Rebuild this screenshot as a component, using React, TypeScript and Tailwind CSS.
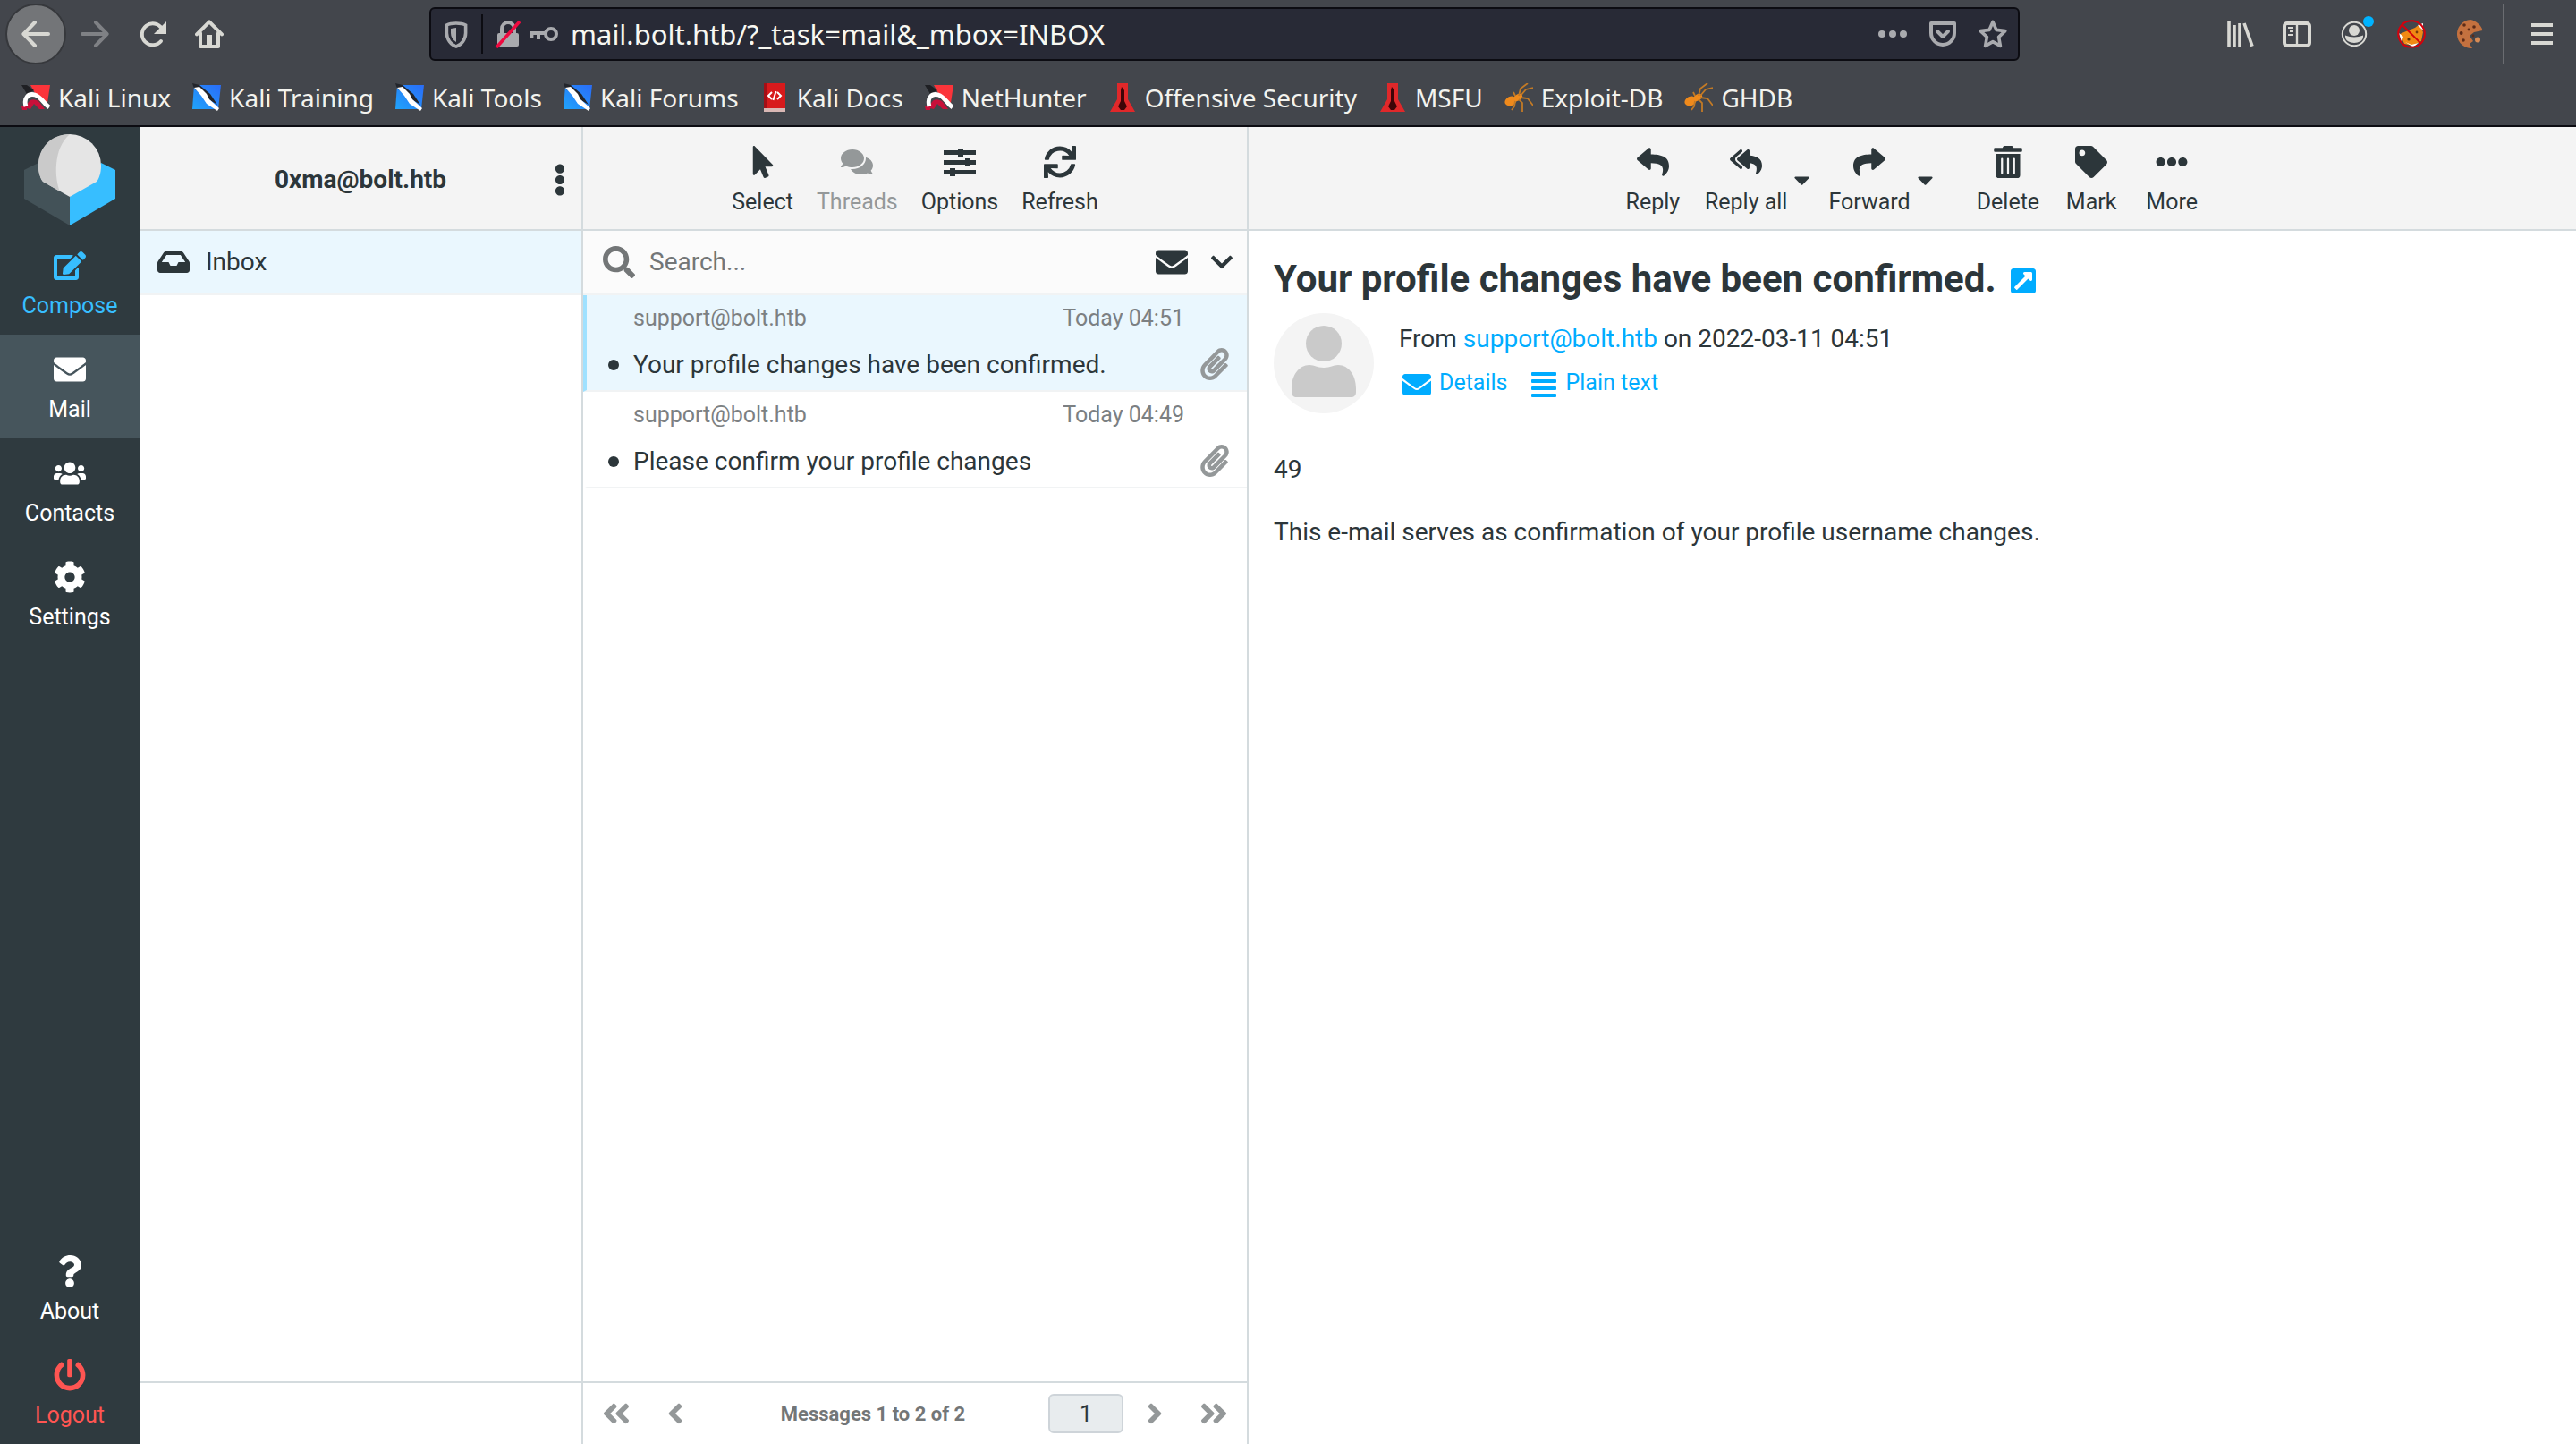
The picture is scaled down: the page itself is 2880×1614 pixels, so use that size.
import type { ReactNode } from 'react';
import {
  FaAlignJustify,
  FaAngleDoubleLeft,
  FaAngleDoubleRight,
  FaAngleLeft,
  FaAngleRight,
  FaCaretDown,
  FaChevronDown,
  FaCog,
  FaComments,
  FaEdit,
  FaEllipsisH,
  FaEllipsisV,
  FaEnvelope,
  FaExternalLinkSquareAlt,
  FaInbox,
  FaMousePointer,
  FaPaperclip,
  FaPowerOff,
  FaQuestion,
  FaReply,
  FaReplyAll,
  FaSearch,
  FaShare,
  FaSync,
  FaTag,
  FaTrashAlt,
  FaUsers,
} from 'react-icons/fa';

const icon = 'h-9 w-auto';

function KaliRed() {
  return (
    <svg viewBox="0 0 16 16" className="size-8">
      <path d="M5 1h11l-1.500 10L10 10z" fill="#fb343a" />
      <path d="M0 1l3 0 4 3-4 2z" fill="#1f2024" />
      <path d="M3 14C3 9 7 8 10 10.500l3 4h-3L7 11.500l-2 3z" fill="#c8103a" />
      <path d="M0 13h3v2H.5z" fill="#c8103a" />
      <path d="M2.500 13C1 8 4 5.500 7.500 6.500 11 7.500 12 11 15.500 13.500" fill="none" stroke="#fff" strokeWidth="2.400" />
    </svg>
  );
}

function KaliBlue() {
  return (
    <svg viewBox="0 0 16 16" className="size-8">
      <defs>
        <linearGradient id="kaliBlue" x1="1" y1="0" x2="0" y2="1">
          <stop offset="0" stopColor="#2a6cf8" />
          <stop offset="1" stopColor="#20a4fb" />
        </linearGradient>
      </defs>
      <path d="M1 1h15l-1.500 13.500H0z" fill="url(#kaliBlue)" />
      <path d="M0 0l4 1 6 5 4 6-5-3-8-6z" fill="#23252b" />
      <path d="M1 2.500L4 2l4 4 1.500 3 5.500 5-1 1.500-6-4L5 7z" fill="#fff" />
    </svg>
  );
}

function KaliDocs() {
  return (
    <svg viewBox="0 0 16 16" className="size-8">
      <path d="M2 0h12v14H2z" fill="#d81a1c" />
      <path d="M2 0h1.500v14H2z" fill="#a30f16" />
      <path d="M2 14h12v2H2z" fill="#d9b7b4" />
      <path d="M6.500 5L4.500 7l2 2M9.500 5l2 2-2 2M8.800 4.500L7.200 9.500" fill="none" stroke="#fff" />
    </svg>
  );
}

function OffSec() {
  return (
    <svg viewBox="0 0 16 16" className="size-8">
      <path d="M5 0h6v9l4 7H1l4-7z" fill="#e0282a" />
      <path d="M7.500 2L9 4v6l1.500 3-1.500 2H7l-1.500-2L7 10V4z" fill="#3d0507" />
    </svg>
  );
}

function Bug() {
  return (
    <svg viewBox="0 0 16 16" className="size-8">
      <ellipse cx="3.500" cy="10" rx="3.400" ry="2.600" transform="rotate(-25 3.500 10)" fill="#ef8a1c" />
      <ellipse cx="7.500" cy="8" rx="2.800" ry="1.800" transform="rotate(-30 7.500 8)" fill="#ef8a1c" />
      <path
        d="M8 7l1-4 4-3M9 7l3-3.500 4-1M9 8l4 .5 3 4M8 9l2 2v5M6 10l-.5 3L4 15M6 7L5 5"
        fill="none"
        stroke="#c27a26"
        strokeWidth=".9"
      />
    </svg>
  );
}

function Cookie() {
  return (
    <svg viewBox="0 0 16 16" className="size-8">
      <path d="M9 0a8 8 0 1 0 1 16L8.500 13.500 10.500 12 8.500 9l2.500-2 4.800-1C15 3 12 .5 9 0z" fill="#c4713f" />
      <circle cx="13" cy="11.300" r="1.500" fill="#d88b55" />
      <g fill="#5d2b17">
        <circle cx="5.500" cy="3" r=".9" />
        <circle cx="11" cy="4" r=".9" />
        <circle cx="3.800" cy="7.500" r="1" />
        <circle cx="8" cy="5.500" r=".7" />
        <circle cx="5" cy="11.500" r=".9" />
        <circle cx="10.500" cy="9" r=".7" />
      </g>
    </svg>
  );
}

function Fox() {
  return (
    <svg viewBox="0 0 16 16" className="size-8">
      <path d="M1.500 8L5 6.500 10 4.500l2.500-2L14.500 7l-1 5-4.500 2.500-5-1z" fill="#f08a14" />
      <path d="M1 7.500l2.500 2-1 3zM11.500 3l3-1v4zM4.500 12.500L8 14l4-1-3 2.200z" fill="#fff" />
      <circle cx="6.500" cy="11" r=".8" fill="#5f3408" />
      <circle cx="11" cy="7" r=".7" fill="#7c3a08" />
      <circle cx="8" cy="8" r="7.400" fill="none" stroke="#d4000c" strokeWidth="1" />
      <path d="M2.800 2.800l10.400 10.400" stroke="#d4000c" strokeWidth="1" />
    </svg>
  );
}

function Logo() {
  return (
    <svg viewBox="0 0 102 102" className="mx-auto mt-2 h-[102px] w-[102px]">
      <path d="M0 40L16 32 51 70v32L0 72z" fill="#435258" />
      <path d="M51 70l35-38 16 8v32l-51 30z" fill="#37beff" />
      <path d="M16 35a35 35 0 0 1 70 0c0 8-2 14-5 18L51 70 21 53c-3-4-5-10-5-18z" fill="#e5e5e5" />
      <path d="M51 0C30 0 16 15 16 35c0 8 2 14 5 18l19 11C34 50 32 16 51 0z" fill="#cacaca" />
    </svg>
  );
}

const bookmarks: { label: string; icon: ReactNode }[] = [
  { label: 'Kali Linux', icon: <KaliRed /> },
  { label: 'Kali Training', icon: <KaliBlue /> },
  { label: 'Kali Tools', icon: <KaliBlue /> },
  { label: 'Kali Forums', icon: <KaliBlue /> },
  { label: 'Kali Docs', icon: <KaliDocs /> },
  { label: 'NetHunter', icon: <KaliRed /> },
  { label: 'Offensive Security', icon: <OffSec /> },
  { label: 'MSFU', icon: <OffSec /> },
  { label: 'Exploit-DB', icon: <Bug /> },
  { label: 'GHDB', icon: <Bug /> },
];

function BrowserChrome() {
  return (
    <header className="shrink-0 border-b-2 border-[#0c0c12] bg-[#43464c] font-['Noto_Sans',sans-serif] text-[28px] text-[#f3f3ee]">
      <div className="flex h-[76px] items-center">
        <nav className="flex w-[480px] shrink-0 items-center text-[#d8d8d3]">
          <button aria-label="Back" className="ml-[6px] flex size-[68px] items-center justify-center rounded-full border-2 border-[#36383c] bg-[#737578]">
            <svg viewBox="0 0 16 16" className="size-8" fill="none" stroke="currentColor" strokeWidth="2" strokeLinecap="round" strokeLinejoin="round">
              <path d="M15 8H1.500M7.500 1.500L1.200 8l6.300 6.500" />
            </svg>
          </button>
          <button aria-label="Forward" className="ml-4 text-[#7f8185]">
            <svg viewBox="0 0 16 16" className="size-8" fill="none" stroke="currentColor" strokeWidth="2" strokeLinecap="round" strokeLinejoin="round">
              <path d="M1 8h13.500M8.500 1.500L14.800 8l-6.300 6.500" />
            </svg>
          </button>
          <button aria-label="Reload" className="ml-8">
            <svg viewBox="0 0 16 16" className="size-8" fill="none" stroke="currentColor" strokeWidth="2" strokeLinecap="round">
              <path d="M13 12A6 6 0 1 1 13.500 5" />
              <path d="M16 1v7H9z" fill="currentColor" stroke="none" />
            </svg>
          </button>
          <button aria-label="Home" className="ml-8">
            <svg viewBox="0 0 16 16" className="size-8" fill="none" stroke="currentColor" strokeWidth="2" strokeLinecap="round" strokeLinejoin="round">
              <path d="M1 8.200L8 1.200l7 7M3 7.500V15h10V7.500" />
              <path d="M6.500 8.500h3V14h-3z" fill="currentColor" stroke="none" />
            </svg>
          </button>
        </nav>

        <div className="flex h-[60px] flex-1 items-center rounded-md border-2 border-[#0c0c12] bg-[#282a36] px-3 text-[#a9aaae]">
          <svg viewBox="0 0 16 16" className="size-8" fill="none" stroke="currentColor">
            <path d="M8 2c2 0 4 .3 5.300 1v4.500C13.300 11 11 14 8 15c-3-1-5.300-4-5.300-7.500V3C4 2.300 6 2 8 2z" strokeWidth="1.800" />
            <path d="M8 4.500v8c-2-1.200-3-3-3-5V5z" fill="currentColor" stroke="none" />
          </svg>
          <span className="mx-3 h-11 w-[2px] bg-[#0c0c12]" />
          <svg viewBox="0 0 16 16" className="size-8" fill="none" stroke="currentColor">
            <path d="M4.500 8V5a3.500 3.500 0 0 1 7 0v3" strokeWidth="2" />
            <rect x="2" y="7.500" width="12" height="7.500" rx="1" fill="currentColor" stroke="none" />
            <path d="M1.500 15.500L14.500 1" stroke="#ee0a40" strokeWidth="1.800" />
          </svg>
          <svg viewBox="0 0 16 16" className="ml-2 size-8" fill="none" stroke="currentColor" strokeWidth="2">
            <circle cx="12" cy="8" r="3" />
            <path d="M9 7.500H0M1.200 7.500v3M5 7.500V11" />
          </svg>
          <input
            aria-label="Address"
            defaultValue="mail.bolt.htb/?_task=mail&_mbox=INBOX"
            className="ml-[14px] min-w-0 flex-1 bg-transparent text-[31px] text-[#f8f8f2] outline-none"
          />
          <button aria-label="Page actions">
            <svg viewBox="0 0 16 16" className="size-8" fill="currentColor">
              <circle cx="2" cy="8" r="2" />
              <circle cx="8" cy="8" r="2" />
              <circle cx="14" cy="8" r="2" />
            </svg>
          </button>
          <button aria-label="Save to Pocket" className="ml-6">
            <svg viewBox="0 0 16 16" className="size-8" fill="none" stroke="currentColor" strokeWidth="2" strokeLinecap="round" strokeLinejoin="round">
              <path d="M1.500 2h13v5.500a6.500 6.500 0 0 1-13 0z" />
              <path d="M5 6.500l3 3 3-3" />
            </svg>
          </button>
          <button aria-label="Bookmark this page" className="ml-6">
            <svg viewBox="0 0 16 16" className="size-8" fill="none" stroke="currentColor" strokeWidth="1.800" strokeLinejoin="round">
              <path d="M8 1.200l2 4.500 4.900.6-3.600 3.400.9 5L8 12.300l-4.200 2.400.9-5L1.100 6.300 6 5.700z" />
            </svg>
          </button>
        </div>

        <div className="flex w-[622px] shrink-0 items-center justify-end pr-6 text-[#d8d8d3]">
          <button aria-label="Library">
            <svg viewBox="0 0 16 16" className="size-8" fill="none" stroke="currentColor" strokeWidth="1.800">
              <path d="M2 1v14M5 3v12M8 2v13M10.500 2l4.500 12.800" />
            </svg>
          </button>
          <button aria-label="Sidebars" className="ml-8">
            <svg viewBox="0 0 16 16" className="size-8" fill="none" stroke="currentColor">
              <rect x="1" y="2" width="14" height="12.500" rx="1.500" strokeWidth="2" />
              <path d="M8 2v12" strokeWidth="1.200" />
              <path d="M3 4.500h3M4 6.500h2M3 8.500h3" />
            </svg>
          </button>
          <button aria-label="Account" className="relative ml-8">
            <svg viewBox="0 0 16 16" className="size-8" fill="none" stroke="currentColor">
              <circle cx="8" cy="8" r="6.600" strokeWidth="1" />
              <circle cx="8" cy="6" r="3" fill="currentColor" stroke="none" />
              <path d="M3.500 9.500c2 1 7 1 9 0 0 4-9 4-9 0z" fill="currentColor" />
            </svg>
            <span className="absolute -top-1 -right-[6px] size-3 rounded-full bg-[#00b3ff]" />
          </button>
          <button aria-label="Proxy disabled" className="ml-8">
            <Fox />
          </button>
          <button aria-label="Cookies" className="ml-8">
            <Cookie />
          </button>
          <span className="mr-7 ml-[22px] h-[68px] w-[2px] bg-[#6b6d71]" />
          <button aria-label="Menu">
            <svg viewBox="0 0 14 16" className="h-8 w-7" stroke="currentColor" strokeWidth="2">
              <path d="M1 3h12M1 8h12M1 13h12" />
            </svg>
          </button>
        </div>
      </div>

      <nav className="flex h-16 items-center gap-6 pt-[2px] pl-6">
        {bookmarks.map((b) => (
          <a key={b.label} href="#" className="flex items-center gap-[9px] whitespace-nowrap">
            {b.icon}
            {b.label}
          </a>
        ))}
      </nav>
    </header>
  );
}

function TaskButton({ icon, label, className = 'text-white' }: { icon: ReactNode; label: string; className?: string }) {
  return (
    <button className={`flex h-[116px] w-full flex-col items-center gap-[7px] pt-[21px] text-[25px] leading-10 ${className}`}>
      {icon}
      {label}
    </button>
  );
}

function TaskMenu() {
  return (
    <nav className="flex w-[156px] shrink-0 flex-col bg-[#2f3a3f]">
      <div className="h-[116px]">
        <Logo />
      </div>
      <TaskButton icon={<FaEdit className={icon} />} label="Compose" className="text-[#37beff]" />
      <TaskButton icon={<FaEnvelope className={icon} />} label="Mail" className="bg-[#46555c] text-white" />
      <TaskButton icon={<FaUsers className={icon} />} label="Contacts" />
      <TaskButton icon={<FaCog className={icon} />} label="Settings" />
      <div className="mt-auto">
        <TaskButton icon={<FaQuestion className={icon} />} label="About" />
        <TaskButton icon={<FaPowerOff className={icon} />} label="Logout" className="text-[#ff5552]" />
      </div>
    </nav>
  );
}

function ToolButton({ icon, label, className = 'px-[13px]' }: { icon: ReactNode; label: string; className?: string }) {
  return (
    <button className={`flex min-w-[90px] flex-col items-center gap-[7px] pt-[21px] text-[25px] leading-10 whitespace-nowrap ${className}`}>
      {icon}
      {label}
    </button>
  );
}

function CaretButton({ label }: { label: string }) {
  return (
    <button aria-label={label} className="mr-1 flex w-[25px] justify-center pt-[45px]">
      <FaCaretDown className="h-7 w-auto" />
    </button>
  );
}

function OptionsIcon() {
  return (
    <svg viewBox="0 0 36 36" className="size-9" fill="currentColor">
      <path d="M0 5h16V3h6v2h14v5H22v2h-6v-2H0zM0 16h24v-2h6v2h6v5h-6v2h-6v-2H0zM0 27h7v-2h6v2h23v5H13v2H7v-2H0z" />
    </svg>
  );
}

function FolderList() {
  return (
    <section className="flex w-[496px] shrink-0 flex-col border-r-2 border-[#d4dbde]">
      <div className="flex h-[116px] shrink-0 items-center border-b-2 border-[#d4dbde] bg-[#f4f4f4] pt-1">
        <h1 className="flex-1 pl-12 text-center text-[28px] font-bold">0xma@bolt.htb</h1>
        <button aria-label="Folder actions" className="flex w-12 justify-center">
          <FaEllipsisV className={icon} />
        </button>
      </div>
      <a href="#" className="flex h-[72px] items-center border-b-2 border-[#f1f3f4] bg-[#eaf7fe] pl-5">
        <FaInbox className={icon} />
        <span className="ml-[18px]">Inbox</span>
      </a>
      <div className="mt-auto h-[70px] border-t-2 border-[#d4dbde]" />
    </section>
  );
}

const messages = [
  { from: 'support@bolt.htb', date: 'Today 04:51', subject: 'Your profile changes have been confirmed.', selected: true },
  { from: 'support@bolt.htb', date: 'Today 04:49', subject: 'Please confirm your profile changes', selected: false },
];

function MessageList() {
  return (
    <section className="flex w-[744px] shrink-0 flex-col border-r-2 border-[#d4dbde]">
      <div className="flex h-[116px] shrink-0 justify-center border-b-2 border-[#d4dbde] bg-[#f4f4f4]">
        <ToolButton icon={<FaMousePointer className={icon} />} label="Select" />
        <ToolButton icon={<FaComments className={icon} />} label="Threads" className="px-[13px] text-[#949899]" />
        <ToolButton icon={<OptionsIcon />} label="Options" />
        <ToolButton icon={<FaSync className={icon} />} label="Refresh" />
      </div>

      <div className="flex h-[72px] shrink-0 items-center border-b-2 border-[#f1f3f4] bg-[#fbfbfb] pr-[14px] pl-[22px]">
        <FaSearch className="h-9 w-auto text-[#737677]" />
        <input aria-label="Search" placeholder="Search..." className="ml-4 min-w-0 flex-1 bg-transparent outline-none placeholder:text-[#737677]" />
        <button aria-label="Unread only">
          <FaEnvelope className={icon} />
        </button>
        <button aria-label="Search options" className="ml-6">
          <FaChevronDown className="h-7 w-auto" />
        </button>
      </div>

      <ul>
        {messages.map((m) => (
          <li
            key={m.date}
            className={`flex h-[108px] border-b-2 border-l-4 border-b-[#f1f3f4] pr-[18px] ${m.selected ? 'border-l-[#9fe1ff] bg-[#eaf7fe]' : 'border-l-transparent'}`}
          >
            <div className="flex w-[52px] items-end pb-[22px] pl-6">
              <span className="size-3 rounded-full bg-[#2c363a]" />
            </div>
            <div className="flex-1">
              <div className="flex h-[52px] items-center justify-between pr-4 text-[25px] text-[#7c8082]">
                <span>{m.from}</span>
                <span>{m.date}</span>
              </div>
              <a href="#" className="block leading-[52px]">
                {m.subject}
              </a>
            </div>
            <FaPaperclip className="mb-[11px] h-9 w-auto self-end text-[#949899]" />
          </li>
        ))}
      </ul>

      <div className="mt-auto flex h-[70px] items-center border-t-2 border-[#d4dbde] px-1 text-[#949899]">
        <button aria-label="First page" className="flex w-[66px] justify-center">
          <FaAngleDoubleLeft className={icon} />
        </button>
        <button aria-label="Previous page" className="flex w-[66px] justify-center">
          <FaAngleLeft className={icon} />
        </button>
        <span className="mr-2 flex-1 text-center text-[22px] font-bold text-[#737677]">Messages 1 to 2 of 2</span>
        <input
          aria-label="Page"
          defaultValue="1"
          className="mr-[2px] h-11 w-[84px] rounded-md border-2 border-[#ced4d9] bg-[#e8ecee] text-center text-[25px] text-[#2c363a]"
        />
        <button aria-label="Next page" className="flex w-[66px] justify-center">
          <FaAngleRight className={icon} />
        </button>
        <button aria-label="Last page" className="flex w-[66px] justify-center">
          <FaAngleDoubleRight className={icon} />
        </button>
      </div>
    </section>
  );
}

function MessageView() {
  return (
    <main className="min-w-0 flex-1">
      <div className="flex h-[116px] justify-center border-b-2 border-[#d4dbde] bg-[#f4f4f4]">
        <ToolButton icon={<FaReply className={icon} />} label="Reply" />
        <ToolButton icon={<FaReplyAll className={icon} />} label="Reply all" className="pr-1 pl-[13px]" />
        <CaretButton label="Reply options" />
        <ToolButton icon={<FaShare className={icon} />} label="Forward" className="pr-1 pl-[13px]" />
        <CaretButton label="Forward options" />
        <ToolButton icon={<FaTrashAlt className={icon} />} label="Delete" className="ml-7 px-[13px]" />
        <ToolButton icon={<FaTag className={icon} />} label="Mark" />
        <ToolButton icon={<FaEllipsisH className={icon} />} label="More" />
      </div>

      <article className="px-7 pt-[30px]">
        <h2 className="flex items-center text-[42px] leading-[48px] font-bold">
          Your profile changes have been confirmed.
          <a href="#" aria-label="Open in new window" className="ml-[14px] pt-1 text-[#00acff]">
            <FaExternalLinkSquareAlt className="h-8 w-auto" />
          </a>
        </h2>
        <div className="mt-[14px] flex">
          <svg viewBox="0 0 112 112" className="size-28 shrink-0">
            <circle cx="56" cy="56" r="56" fill="#f4f4f4" />
            <circle cx="56" cy="34" r="20" fill="#cacaca" />
            <path d="M20 84c0-14 8-26 20-26 6 0 8 3 16 3s10-3 16-3c12 0 20 12 20 26v4c0 4-2 6-6 6H26c-4 0-6-2-6-6z" fill="#cacaca" />
          </svg>
          <div className="pt-2 pl-7">
            <p className="leading-[42px]">
              From{' '}
              <a href="#" className="text-[#00acff]">
                support@bolt.htb
              </a>{' '}
              on 2022-03-11 04:51
            </p>
            <p className="mt-2 flex text-[25px] leading-10 text-[#00acff]">
              <a href="#" className="mr-5 flex items-end gap-[5px]">
                <span className="flex h-9 w-10 items-center justify-center">
                  <FaEnvelope className="h-8 w-auto" />
                </span>
                Details
              </a>
              <a href="#" className="flex items-end gap-[5px]">
                <span className="flex h-9 w-10 items-center justify-center">
                  <FaAlignJustify className="h-8 w-auto" />
                </span>
                Plain text
              </a>
            </p>
          </div>
        </div>
        <div className="mt-[42px] space-y-7 leading-[42px]">
          <p>49</p>
          <p>This e-mail serves as confirmation of your profile username changes.</p>
        </div>
      </article>
    </main>
  );
}

export default function App() {
  return (
    <div className="flex h-screen flex-col overflow-hidden bg-white">
      <BrowserChrome />
      <div className="flex min-h-0 flex-1 font-[Roboto,sans-serif] text-[28px] text-[#2c363a]">
        <TaskMenu />
        <FolderList />
        <MessageList />
        <MessageView />
      </div>
    </div>
  );
}
